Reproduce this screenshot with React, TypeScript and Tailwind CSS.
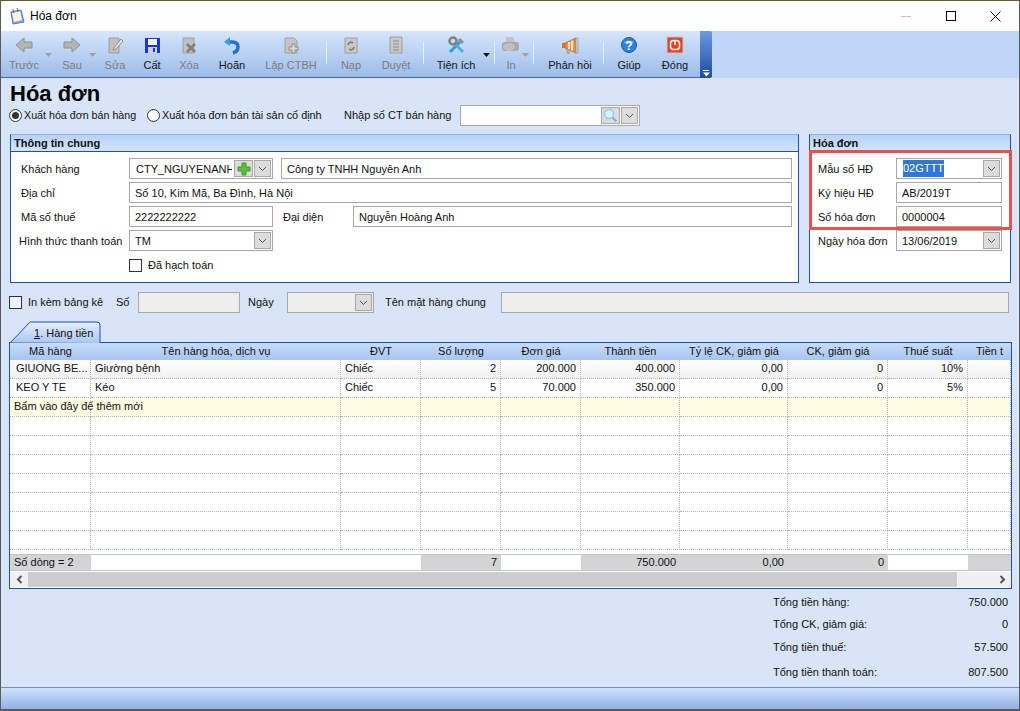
import React from 'react';

const GRID_COLS = 'grid grid-cols-[81px_250px_80px_80px_80px_99px_108px_100px_80px_43px]';

const Chevron = () => (
  <span className="flex h-[17px] w-[17px] shrink-0 items-center justify-center border border-[#a8a8a8] bg-[#dcdcdc]">
    <svg width="9" height="6" viewBox="0 0 9 6" fill="none" stroke="#555" strokeWidth="1">
      <path d="M1 1l3.5 3.5L8 1" />
    </svg>
  </span>
);

const Field: React.FC<{ className: string; value?: string; combo?: boolean; bg?: string }> = ({
  className,
  value,
  combo,
  bg = 'bg-white',
}) => (
  <div className={`flex h-[21px] items-center border border-[#a8a8a8] pl-[5px] pr-[1px] ${bg} ${className}`}>
    <span className="min-w-0 flex-1 truncate pt-px">{value}</span>
    {combo && <Chevron />}
  </div>
);

const icons: Record<string, React.ReactNode> = {
  back: <path d="M10 3L2 10l8 7v-4h8V7h-8z" fill="#b4b4b4" stroke="#909090" />,
  next: <path d="M10 3l8 7-8 7v-4H2V7h8z" fill="#b4b4b4" stroke="#909090" />,
  edit: (
    <g>
      <path d="M4 3h10v15H4z" fill="#c0c0c0" stroke="#a0a0a0" />
      <path d="M9 13l7-9 2 2-7 8-3 1z" fill="#e8e8e8" stroke="#909090" />
    </g>
  ),
  save: (
    <g>
      <path d="M3 3h15v15H3z" fill="#1a35d0" />
      <path d="M6 4h9v6H6z" fill="#eef3ff" />
      <path d="M6 12h9v6H6z" fill="#c8d0e8" />
      <path d="M11 13h2v4h-2z" fill="#1a35d0" />
    </g>
  ),
  del: (
    <g>
      <path d="M4 3h11v15H4z" fill="#c0c0c0" stroke="#a0a0a0" />
      <path d="M8 9l8 8M16 9l-8 8" stroke="#808080" strokeWidth="2.500" />
    </g>
  ),
  undo: (
    <g fill="none">
      <path d="M5 7h5c4 0 6 2 6 5 0 3-2 5-5 6" stroke="#1f72d4" strokeWidth="3.500" />
      <path d="M8 2L2 7l6 4z" fill="#3f9ae8" />
    </g>
  ),
  plus: (
    <g>
      <path d="M4 3h9l3 3v12H4z" fill="#c4c4c4" stroke="#a0a0a0" />
      <path d="M11 9h3v3h3v3h-3v3h-3v-3H8v-3h3z" fill="#d8d8d8" stroke="#909090" />
    </g>
  ),
  reload: (
    <g fill="none">
      <path d="M4 3h12v15H4z" fill="#c8c8c8" stroke="#a0a0a0" />
      <path d="M7 10a3 3 0 015-2M13 12a3 3 0 01-5 2" stroke="#777" strokeWidth="1.500" />
    </g>
  ),
  doc: (
    <g>
      <path d="M4 2h12v16H4z" fill="#c8c8c8" stroke="#a0a0a0" />
      <path d="M7 6h6M7 9h6M7 12h6M7 15h6" stroke="#8a8a8a" />
    </g>
  ),
  tools: (
    <g fill="none">
      <path d="M4 17L14 7" stroke="#2f9ae0" strokeWidth="3" />
      <path d="M13 4l4 4" stroke="#909090" strokeWidth="3" />
      <path d="M8 8l9 9" stroke="#4aaee8" strokeWidth="3" />
      <circle cx="7" cy="6" r="3.500" stroke="#808080" strokeWidth="2.500" />
    </g>
  ),
  print: (
    <g>
      <path d="M5 2h7l2 5H5z" fill="#c4c4c4" />
      <rect x="1" y="7" width="17" height="9" rx="3" fill="#a8a8a8" />
      <ellipse cx="8" cy="12" rx="6" ry="4" fill="#c0c0c0" />
    </g>
  ),
  mega: (
    <g>
      <path d="M2 8h3v5H2z" fill="#e07030" />
      <path d="M5 8l11-5v15L5 13z" fill="#f09040" stroke="#c05a20" strokeWidth="0.800" />
      <path d="M9 7v7M12 5.500v10" stroke="#fff" strokeWidth="1.500" />
      <path d="M16 3h2v15h-2z" fill="#d8d8d8" stroke="#999" strokeWidth="0.800" />
      <path d="M6 14h3l1 5H7z" fill="#a8a8a8" />
    </g>
  ),
  help: (
    <g>
      <circle cx="10" cy="10" r="7.500" fill="#2f80e0" stroke="#1a5ab0" />
      <path d="M5 7.500a6 4 0 0110 0 7 3 0 01-10 0z" fill="#90c4f4" />
      <text x="10" y="14.500" textAnchor="middle" fontSize="12" fontWeight="700" fill="#fff" fontFamily="Liberation Sans">?</text>
    </g>
  ),
  close: (
    <g fill="none">
      <rect x="2" y="2" width="16" height="16" fill="#e0452c" stroke="#c8c8c8" />
      <rect x="5.500" y="5.500" width="9" height="9" rx="3" stroke="#fff" strokeWidth="1.500" />
      <path d="M10 5v5" stroke="#fff" strokeWidth="1.500" />
    </g>
  ),
};

const Arrow: React.FC<{ className: string; dark?: boolean }> = ({ className, dark }) => (
  <svg className={`absolute ${className}`} width="7" height="4" viewBox="0 0 7 4">
    <path d="M0 0h7L3.500 4z" fill={dark ? '#111' : '#a0a0a0'} />
  </svg>
);

const Tool: React.FC<{
  label: string;
  icon: string;
  w: string;
  off?: boolean;
  children?: React.ReactNode;
}> = ({ label, icon, w, off, children }) => (
  <div className={`relative flex h-full shrink-0 flex-col items-center pt-[4px] ${w}`}>
    <svg width="20" height="20" viewBox="0 0 20 20">
      {icons[icon]}
    </svg>
    <span className={`mt-[3px] whitespace-nowrap leading-[14px] ${off ? 'text-[#7d7d7d]' : 'text-[#101820]'}`}>{label}</span>
    {children}
  </div>
);

const Sep = () => <div className="mt-[11px] h-[22px] w-px shrink-0 bg-[#e4eefc]" />;

const PanelHead: React.FC<{ title: string }> = ({ title }) => (
  <div className="h-[17px] border-b border-[#1f4fa8] bg-gradient-to-b from-[#b7d2f8] to-[#d3e3fb] pl-[3px] text-[11px] font-bold leading-[16px] text-[#111]">
    {title}
  </div>
);

const Row: React.FC<{ cells: string[]; fill?: string }> = ({ cells, fill = '' }) => (
  <div className={`${GRID_COLS} h-[19px] shrink-0 ${fill}`}>
    {cells.map((c, i) => (
      <div
        key={i}
        className={`overflow-hidden whitespace-nowrap border-b border-r border-dotted border-[#b4b4b4] leading-[17px] ${i > 2 ? 'pr-[4px] text-right' : i === 0 ? 'pl-[6px]' : 'pl-[4px]'}`}
      >
        {c}
      </div>
    ))}
  </div>
);

const heads = ['Mã hàng', 'Tên hàng hóa, dịch vụ', 'ĐVT', 'Số lượng', 'Đơn giá', 'Thành tiền', 'Tỷ lệ CK, giảm giá', 'CK, giảm giá', 'Thuế suất', 'Tiền t'];
const blank = ['', '', '', '', '', '', '', '', '', ''];

const Total: React.FC<{ label: string; value: string; className?: string }> = ({ label, value, className = '' }) => (
  <div className={`flex h-[22px] items-center justify-between pl-[772px] pr-[11px] ${className}`}>
    <span>{label}</span>
    <span>{value}</span>
  </div>
);

export default function App() {
  return (
    <div className="flex h-[711px] w-[1020px] flex-col overflow-hidden border-x border-t border-b-2 border-x-[#5a5a5a] border-t-[#6b5a30] border-b-[#5a5a5a] bg-[#d8e4f8] font-['Liberation_Sans',Arial,sans-serif] text-[11px] text-[#111]">
      {/* Title bar */}
      <div className="flex h-[30px] shrink-0 items-center bg-white">
        <svg className="ml-[8px]" width="16" height="17" viewBox="0 0 16 17">
          <path d="M2 4l10-2 3 12-11 2z" fill="#8fa8e8" stroke="#5a70c0" />
          <path d="M3 5l8-2 2 9-8 2z" fill="#fdf6d8" />
          <path d="M4 1l1 4M8 0l1 4" stroke="#666" />
        </svg>
        <span className="ml-[5px] text-[12px] text-black">Hóa đơn</span>
        <div className="ml-auto mr-[18px] flex items-center">
          <div className="mr-[35px] h-px w-[10px] bg-[#c4c4c4]" />
          <div className="mr-[34px] h-[10px] w-[10px] border border-black" />
          <svg width="11" height="11" viewBox="0 0 11 11" stroke="#111" strokeWidth="1">
            <path d="M0.500 0.500l10 10M10.500 0.500l-10 10" />
          </svg>
        </div>
      </div>

      {/* Toolbar */}
      <div className="flex h-[47px] shrink-0 bg-[#bfd6f8]">
        <div className="flex w-[699px] shrink-0 border-b border-[#3f6cb4] bg-gradient-to-b from-[#d6e6fc] to-[#9dbce8] pl-[3px]">
          <Tool label="Trước" icon="back" w="w-[40px]" off />
          <div className="relative w-[7px] shrink-0">
            <Arrow className="left-[1px] top-[22px]" />
          </div>
          <Tool label="Sau" icon="next" w="w-[42px]" off>
            <Arrow className="right-[-3px] top-[22px]" />
          </Tool>
          <Tool label="Sửa" icon="edit" w="w-[44px]" off />
          <Tool label="Cất" icon="save" w="w-[30px]" />
          <Tool label="Xóa" icon="del" w="w-[44px]" off />
          <Tool label="Hoãn" icon="undo" w="w-[42px]" />
          <Tool label="Lập CTBH" icon="plus" w="w-[73px] pl-[3px]" off />
          <Sep />
          <Tool label="Nạp" icon="reload" w="w-[48px]" off />
          <Tool label="Duyệt" icon="doc" w="w-[42px]" off />
          <div className="w-[6px] shrink-0" />
          <Sep />
          <Tool label="Tiện ích" icon="tools" w="w-[64px]">
            <Arrow className="right-[-2px] top-[22px]" dark />
          </Tool>
          <div className="w-[6px] shrink-0" />
          <Sep />
          <Tool label="In" icon="print" w="w-[32px]" off>
            <Arrow className="right-[-2px] top-[22px]" />
          </Tool>
          <div className="w-[6px] shrink-0" />
          <Sep />
          <Tool label="Phản hồi" icon="mega" w="w-[69px] pl-[3px]" />
          <Sep />
          <Tool label="Giúp" icon="help" w="w-[50px]" />
          <Tool label="Đóng" icon="close" w="w-[42px]" />
        </div>
        <div className="relative h-full w-[12px] rounded-r-[2px] bg-gradient-to-b from-[#6c9ae4] to-[#1f4ba0]">
          <svg className="absolute bottom-[1px] left-[3px]" width="7" height="7" viewBox="0 0 7 7">
            <path d="M0 0h6v1H0zM0 2.500h7L3.500 6.500z" fill="#fff" />
          </svg>
        </div>
      </div>

      {/* Form body */}
      <div className="relative min-h-0 flex-1 pl-[9px]">
        <div className="h-[27px] pt-[3px] text-[22px] font-bold leading-[25px] text-black">Hóa đơn</div>

        <div className="-ml-px flex h-[21px] items-center">
          <span className="flex h-[13px] w-[13px] items-center justify-center rounded-full border border-[#333] bg-white">
            <span className="h-[7px] w-[7px] rounded-full bg-[#333]" />
          </span>
          <span className="ml-[2px] w-[112px] whitespace-nowrap text-[10.7px]">Xuất hóa đơn bán hàng</span>
          <span className="ml-[11px] h-[13px] w-[13px] rounded-full border border-[#333] bg-white" />
          <span className="ml-[2px] w-[160px] whitespace-nowrap text-[10.85px]">Xuất hóa đơn bán tài sản cố định</span>
          <span className="ml-[22px] w-[107px] whitespace-nowrap">Nhập số CT bán hàng</span>
          <div className="ml-[9px] flex h-[21px] w-[180px] items-center justify-end border border-[#a8a8a8] bg-white pr-[1px]">
            <span className="flex h-[17px] w-[19px] items-center justify-center border border-[#a8a8a8] bg-[#dcdcdc]">
              <svg width="15" height="15" viewBox="0 0 15 15" fill="none">
                <circle cx="6" cy="6" r="4.500" fill="#d8f2fd" stroke="#8ccdf2" strokeWidth="1.500" />
                <path d="M9.500 9.500l4 4" stroke="#90a8dc" strokeWidth="2" />
              </svg>
            </span>
            <span className="ml-px"><Chevron /></span>
          </div>
        </div>

        {/* Panels */}
        <div className="mt-[8px] flex h-[149px] gap-[10px]">
          <div className="w-[789px] border border-t-[#8fb4ec] border-x-[#1f4fa8] border-b-[#1f4fa8] bg-white">
            <PanelHead title="Thông tin chung" />
            <div className="flex flex-col gap-[3px] pt-[6px]">
              <div className="flex items-center">
                <span className="w-[118px] shrink-0 pl-[10px] pt-[2px]">Khách hàng</span>
                <div className="flex h-[21px] w-[144px] items-center border border-[#a8a8a8] pl-[6px] pr-[1px]">
                  <span className="w-[96px] overflow-hidden whitespace-nowrap pt-px">CTY_NGUYENANH</span>
                  <span className="ml-[2px] flex h-[17px] w-[19px] items-center justify-center border border-[#a8a8a8] bg-[#dcdcdc]">
                    <svg width="14" height="14" viewBox="0 0 14 14">
                      <path d="M5 1h4v4h4v4H9v4H5V9H1V5h4z" fill="#5cc040" stroke="#3c9a28" />
                    </svg>
                  </span>
                  <span className="ml-px"><Chevron /></span>
                </div>
                <Field className="ml-[8px] w-[511px]" value="Công ty TNHH Nguyên Anh" />
              </div>
              <div className="flex items-center">
                <span className="w-[118px] shrink-0 pl-[10px] pt-[2px]">Địa chỉ</span>
                <Field className="w-[663px]" value="Số 10, Kim Mã, Ba Đình, Hà Nội" />
              </div>
              <div className="flex items-center">
                <span className="w-[118px] shrink-0 pl-[10px] pt-[2px]">Mã số thuế</span>
                <Field className="w-[144px]" value="2222222222" />
                <span className="ml-[10px] w-[70px] pt-[2px]">Đại diện</span>
                <Field className="w-[439px]" value="Nguyễn Hoàng Anh" />
              </div>
              <div className="flex items-center">
                <span className="w-[118px] shrink-0 whitespace-nowrap pl-[8px] pt-[2px]">Hình thức thanh toán</span>
                <Field className="w-[144px]" value="TM" combo />
              </div>
              <div className="flex h-[20px] items-center pl-[118px] pt-[3px]">
                <span className="h-[13px] w-[13px] border border-[#333] bg-white" />
                <span className="ml-[6px]">Đã hạch toán</span>
              </div>
            </div>
          </div>

          <div className="w-[202px] border border-t-[#8fb4ec] border-x-[#1f4fa8] border-b-[#1f4fa8] bg-white">
            <PanelHead title="Hóa đơn" />
            <div className="flex flex-col gap-[3px] pt-[6px]">
              <div className="flex items-center">
                <span className="w-[86px] shrink-0 pl-[8px] pt-[2px]">Mẫu số HĐ</span>
                <div className="flex h-[21px] w-[106px] items-center border border-[#a8a8a8] pl-[6px] pr-[1px]">
                  <span className="bg-[#3078d8] text-white">02GTTT</span>
                  <span className="ml-auto"><Chevron /></span>
                </div>
              </div>
              <div className="flex items-center">
                <span className="w-[86px] shrink-0 pl-[8px] pt-[2px]">Ký hiệu HĐ</span>
                <Field className="w-[106px]" value="AB/2019T" />
              </div>
              <div className="flex items-center">
                <span className="w-[86px] shrink-0 pl-[8px] pt-[2px]">Số hóa đơn</span>
                <Field className="w-[106px]" value="0000004" />
              </div>
              <div className="flex items-center">
                <span className="w-[86px] shrink-0 pl-[8px] pt-[2px]">Ngày hóa đơn</span>
                <Field className="w-[106px]" value="13/06/2019" combo />
              </div>
            </div>
          </div>
        </div>

        {/* Highlight drawn over the invoice panel */}
        <div className="absolute left-[808px] top-[72px] h-[80px] w-[203px] border-[3px] border-[#e8504a]" />

        {/* Attachment row */}
        <div className="-ml-px mt-[9px] flex h-[21px] items-center">
          <span className="h-[13px] w-[13px] border border-[#333] bg-[#eef3fc]" />
          <span className="ml-[6px] w-[88px]">In kèm bảng kê</span>
          <span className="w-[22px]">Số</span>
          <Field className="w-[102px]" bg="bg-[#eeeeee]" />
          <span className="ml-[8px] w-[39px]">Ngày</span>
          <Field className="w-[87px]" bg="bg-[#eeeeee]" combo />
          <span className="ml-[11px] w-[116px]">Tên mặt hàng chung</span>
          <Field className="w-[508px]" bg="bg-[#eeeeee]" />
        </div>

        {/* Tab */}
        <div className="relative mt-[8px] h-[21px] w-[91px]">
          <svg className="absolute inset-0" width="91" height="22" viewBox="0 0 91 22">
            <defs>
              <linearGradient id="tabFill" x1="0" y1="0" x2="0" y2="1">
                <stop offset="0" stopColor="#e4eefc" />
                <stop offset="1" stopColor="#a9c7f2" />
              </linearGradient>
            </defs>
            <path d="M0.500 21.500L20 1h67q3 0 3 3v18" fill="url(#tabFill)" stroke="#1f4fa8" />
          </svg>
          <span className="absolute left-[24px] top-[4px]"><span className="underline">1</span>. Hàng tiền</span>
        </div>

        {/* Detail grid */}
        <div className="-ml-px flex h-[247px] w-[1003px] flex-col overflow-hidden border border-[#1f4fa8] bg-white">
          <div className={`${GRID_COLS} h-[17px] shrink-0 bg-gradient-to-b from-[#c8dcf9] to-[#a7c5f2]`}>
            {heads.map((h) => (
              <div key={h} className="overflow-hidden whitespace-nowrap text-center leading-[16px]">{h}</div>
            ))}
          </div>
          <Row cells={['GIUONG BE...', 'Giường bệnh', 'Chiếc', '2', '200.000', '400.000', '0,00', '0', '10%', '']} fill="bg-gradient-to-b from-white to-[#efefef]" />
          <Row cells={['KEO Y TE', 'Kéo', 'Chiếc', '5', '70.000', '350.000', '0,00', '0', '5%', '']} />
          <div className="relative shrink-0">
            <Row cells={blank} fill="bg-[#fffde4]" />
            <span className="absolute left-[4px] top-0 leading-[17px]">Bấm vào đây để thêm mới</span>
          </div>
          {Array.from({ length: 7 }, (_, i) => (
            <Row key={i} cells={blank} />
          ))}
          <div className="h-[4px] shrink-0" />

          {/* Footer totals */}
          <div className={`${GRID_COLS} h-[17px] shrink-0 border-y border-[#b8c8d8] bg-[#d4d4d4] leading-[15px]`}>
            <div className="px-[4px]">Số dòng = 2</div>
            <div className="col-span-2 bg-white" />
            <div className="pr-[4px] text-right">7</div>
            <div className="bg-white" />
            <div className="pr-[4px] text-right">750.000</div>
            <div className="pr-[4px] text-right">0,00</div>
            <div className="pr-[4px] text-right">0</div>
            <div className="bg-white" />
            <div />
          </div>

          {/* Horizontal scrollbar */}
          <div className="mt-px flex h-[15px] shrink-0 bg-[#cdcdcd]">
            <div className="flex w-[18px] items-center justify-center bg-[#f0f0f0]">
              <svg width="7" height="9" viewBox="0 0 7 9" fill="none" stroke="#555" strokeWidth="2">
                <path d="M5.500 1L2 4.500 5.500 8" />
              </svg>
            </div>
            <div className="ml-auto flex w-[54px] items-center justify-end bg-[#f0f0f0] pr-[5px]">
              <svg width="7" height="9" viewBox="0 0 7 9" fill="none" stroke="#555" strokeWidth="2">
                <path d="M1.500 1L5 4.500 1.500 8" />
              </svg>
            </div>
          </div>
        </div>

        {/* Totals */}
        <div className="-ml-[9px] mt-[2px]">
          <Total label="Tổng tiền hàng:" value="750.000" />
          <Total label="Tổng CK, giảm giá:" value="0" />
          <Total label="Tổng tiền thuế:" value="57.500" className="mt-px" />
          <Total label="Tổng tiền thanh toán:" value="807.500" className="mt-[3px]" />
        </div>
      </div>

      {/* Status bar */}
      <div className="h-[22px] shrink-0 border-t border-[#6f8fc4] bg-gradient-to-b from-[#d0e1fb] to-[#8fb1e4]" />
    </div>
  );
}
